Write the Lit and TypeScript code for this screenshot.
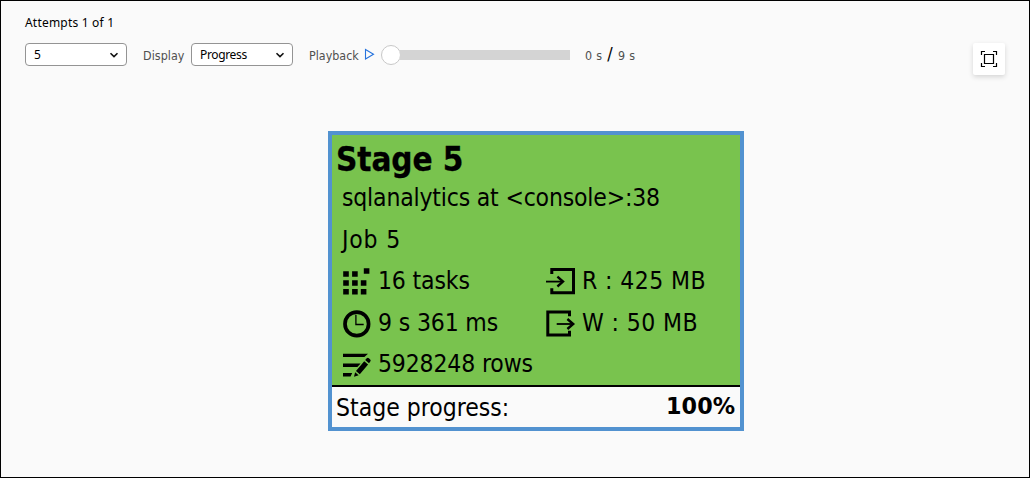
import { LitElement, html, css, svg } from "lit";
import { customElement } from "lit/decorators.js";

const chevron = html`<svg class="chev" width="10" height="8" viewBox="0 0 10 8"><path d="M1.5 2.2 5 5.6 8.5 2.2" fill="none" stroke="#111" stroke-width="1.6"/></svg>`;

const icon = (body: unknown) => html`<svg class="icon" width="30" height="28" viewBox="0 0 30 28">${body}</svg>`;

const tasks = icon(svg`<path d="M1.2 3.2h5.6v5.6H1.2zM10.1 3.2h5.6v5.6h-5.6zM21.8.2h5.6v5.6h-5.6zM1.2 12.2h5.6v5.6H1.2zM10.1 12.2h5.6v5.6h-5.6zM18.8 12.2h5.6v5.6h-5.6zM1.2 21h5.6v5.6H1.2zM10.1 21h5.6v5.6h-5.6zM18.8 21h5.6v5.6h-5.6z"/>`);
const clock = icon(svg`<circle cx="14.8" cy="13.9" r="11.8" fill="none" stroke="#000" stroke-width="3.7"/><path d="M13.9 4.8v9.7h7.8" fill="none" stroke="#000" stroke-width="1.3"/>`);
const rows = icon(svg`<path d="M1 2.7h25l-3.6 3.4H1zM1 12.6h17.6l-3.2 3.5H1zM1 22h9.2l-1.6 3.5H1z"/>
  <path d="M14 19.9 22.2 10.2l3.9 3.4-8.3 9.7zM13.1 21.2l3.6 3.1-4.7 1.5zM23.2 9l1.5-1.8q1-1 2.2 0l1.3 1.2q1 1 .1 2.1l-1.3 1.7z"/>`);
const read = icon(svg`<path d="M5.8 6V1.5h21.7v23.3H5.8v-4.5" fill="none" stroke="#000" stroke-width="3"/><path d="M0 13.6h17" fill="none" stroke="#000" stroke-width="1.8"/><path d="M11.4 8.7l5.6 4.9-5.6 4.9" fill="none" stroke="#000" stroke-width="2.4"/>`);
const write = icon(svg`<path d="M23.5 6.2V1.9H1.8v23.2h21.7v-4.4" fill="none" stroke="#000" stroke-width="3"/><path d="M10.7 14h17" fill="none" stroke="#000" stroke-width="1.8"/><path d="M21.4 9l5.8 5-5.8 5" fill="none" stroke="#000" stroke-width="2.4"/>`);

@customElement("app-root")
export class AppRoot extends LitElement {
  static styles = css`
    :host { display: block; box-sizing: border-box; width: 1030px; height: 478px; border: 1px solid #000; background: #fafafa; overflow: hidden; font-family: "Noto Sans", sans-serif; color: #000; }
    * { box-sizing: border-box; }
    .attempts { height: 42px; padding: 13px 0 0 24px; font-size: 12px; line-height: 17px; letter-spacing: 0.2px; white-space: nowrap; }
    .bar { display: flex; height: 46px; padding: 0 24px; align-items: flex-start; white-space: nowrap; }
    .select { display: flex; flex: none; width: 102px; height: 23px; padding: 0 7px 0 8px; border: 1px solid #949494; border-radius: 4px; background: #fff; align-items: center; justify-content: space-between; font-size: 12px; line-height: 21px; }
    .select span { letter-spacing: -0.35px; }
    .label { flex: none; font: 12.4px/23px "DejaVu Sans Condensed", "DejaVu Sans", sans-serif; font-stretch: condensed; color: #505050; padding-top: 1px; }
    .display { width: 64px; padding-left: 16px; letter-spacing: 0.05px; }
    .playback { width: 71px; padding-left: 16px; letter-spacing: 0; }
    .play { flex: none; width: 17px; height: 23px; }
    .slider { display: flex; flex: none; width: 189px; height: 23px; align-items: center; }
    .knob { width: 20px; height: 20px; border: 1px solid #c8c8c8; border-radius: 50%; background: #fff; flex: none; margin-top: 1px; }
    .track { width: 170px; height: 10px; background: #d4d4d4; margin-left: -1px; }
    .time { display: flex; padding-left: 15px; letter-spacing: 0.3px; }
    .slash { font-size: 18px; line-height: 20px; color: #000; padding: 0 5px; }
    .fit { display: flex; width: 32px; height: 32px; margin-left: auto; border-radius: 2px; background: #fff; box-shadow: 0 2px 5px rgba(0,0,0,.15); align-items: center; justify-content: center; }
    .card { width: 416px; height: 300px; margin: 42px 0 0 327px; border: 4px solid #5292d0; background: #79c34e; font-family: "DejaVu Sans Condensed", "DejaVu Sans", sans-serif; font-stretch: condensed; font-size: 24.5px; white-space: nowrap; }
    .title { height: 42px; padding-left: 4px; font-size: 33px; line-height: 50px; font-weight: 700; letter-spacing: -0.1px; -webkit-text-stroke: 0.3px #000; }
    .line { height: 42px; line-height: 42px; padding-left: 10px; letter-spacing: -0.18px; }
    .job { letter-spacing: 0.8px; }
    .stats { display: grid; grid-template-columns: 204px 1fr; grid-auto-rows: 41.5px; height: 124px; padding-left: 10px; }
    .stat { display: flex; line-height: 39.5px; letter-spacing: -0.15px; }
    .size { letter-spacing: 0.4px; }
    .stat svg { margin: 7px 6px 0 0; flex: none; overflow: visible; }
    .foot { display: flex; justify-content: space-between; height: 42px; border-top: 2px solid #000; background: #fafafa; padding: 0 5px 0 4px; line-height: 41px; }
    .foot b { font-family: "DejaVu Sans", sans-serif; font-stretch: normal; font-size: 22.3px; line-height: 38px; }
  `;
  render() {
    return html`
      <div class="attempts">Attempts 1 of 1</div>
      <div class="bar">
        <div class="select"><span>5</span>${chevron}</div>
        <div class="label display">Display</div>
        <div class="select"><span>Progress</span>${chevron}</div>
        <div class="label playback">Playback</div>
        <svg class="play" width="17" height="23" viewBox="0 0 17 23"><path d="M1.5 6.5v9.5l8-4.8z" fill="none" stroke="#2673dd" stroke-width="1.1"/></svg>
        <div class="slider"><div class="knob"></div><div class="track"></div></div>
        <div class="label time"><span>0 s</span><span class="slash">/</span><span>9 s</span></div>
        <div class="fit"><svg width="18" height="18" viewBox="0 0 18 18" fill="none" stroke="#000"><path d="M1.5 5V1.5H5M13 1.5h3.5V5M16.5 13v3.5H13M5 16.5H1.5V13M4.5 4.5h9v9h-9z" stroke-width="1.2"/></svg></div>
      </div>
      <div class="card">
        <div class="title">Stage 5</div>
        <div class="line">sqlanalytics at &lt;console&gt;:38</div>
        <div class="line job">Job 5</div>
        <div class="stats">
          <div class="stat">${tasks}<span>16 tasks</span></div>
          <div class="stat size">${read}<span>R : 425 MB</span></div>
          <div class="stat">${clock}<span>9 s 361 ms</span></div>
          <div class="stat size">${write}<span>W : 50 MB</span></div>
          <div class="stat">${rows}<span>5928248 rows</span></div>
        </div>
        <div class="foot"><span>Stage progress:</span><b>100%</b></div>
      </div>`;
  }
}
